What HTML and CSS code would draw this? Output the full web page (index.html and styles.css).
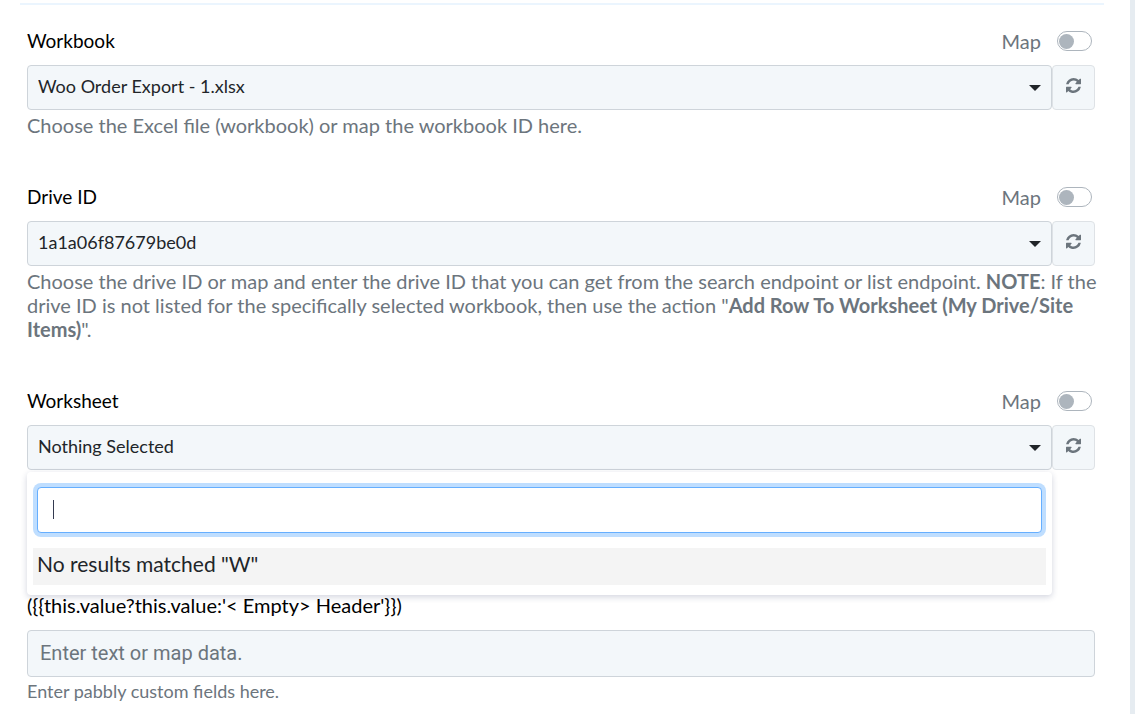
FILE: index.html
```html
<!DOCTYPE html>
<html lang="en">
<head>
  <meta charset="UTF-8" />
  <meta name="viewport" content="width=device-width, initial-scale=1" />
  <title>Action setup</title>
  <link rel="stylesheet" href="styles.css">
</head>
<body>
  <svg class="sprite" aria-hidden="true">
    <symbol id="icon-refresh" viewBox="0 0 1536 1536">
      <path d="M1511 928q0 5-1 7-64 268-268 434.500T764 1536q-146 0-282.500-55T238 1324l-129 129q-19 19-45 19t-45-19-19-45V960q0-26 19-45t45-19h448q26 0 45 19t19 45-19 45l-137 137q71 66 161 102t187 36q134 0 250-65t186-179q11-17 53-117 8-23 30-23h192q13 0 22.500 9.500t9.500 22.500zm25-800v448q0 26-19 45t-45 19h-448q-26 0-45-19t-19-45 19-45l138-138Q969 256 768 256q-134 0-250 65T332 500q-11 17-53 117-8 23-30 23H50q-13 0-22.500-9.500T18 608v-7q65-268 270-434.500T768 0q146 0 284 55.500T1297 212l130-129q19-19 45-19t45 19 19 45z" />
    </symbol>
  </svg>

  <form class="card">
    <div class="field">
      <div class="field-head">
        <label for="workbook">Workbook</label>
        <label class="map">Map <input type="checkbox" class="switch"></label>
      </div>
      <div class="control">
        <div class="select-wrap">
          <select id="workbook">
            <option>Woo Order Export - 1.xlsx</option>
          </select>
        </div>
        <button type="button" class="refresh" aria-label="Refresh workbooks">
          <svg><use href="#icon-refresh" /></svg>
        </button>
      </div>
      <p class="help">Choose the Excel file (workbook) or map the workbook ID here.</p>
    </div>

    <div class="field">
      <div class="field-head">
        <label for="drive">Drive ID</label>
        <label class="map">Map <input type="checkbox" class="switch"></label>
      </div>
      <div class="control">
        <div class="select-wrap">
          <select id="drive">
            <option>1a1a06f87679be0d</option>
          </select>
        </div>
        <button type="button" class="refresh" aria-label="Refresh drives">
          <svg><use href="#icon-refresh" /></svg>
        </button>
      </div>
      <p class="help">Choose the drive ID or map and enter the drive ID that you can get from the search endpoint or list endpoint. <b>NOTE</b>: If the drive ID is not listed for the specifically selected workbook, then use the action "<b>Add Row To Worksheet (My Drive/Site Items)</b>".</p>
    </div>

    <div class="field field-open">
      <div class="field-head">
        <label for="worksheet">Worksheet</label>
        <label class="map">Map <input type="checkbox" class="switch"></label>
      </div>
      <div class="control">
        <div class="select-wrap">
          <select id="worksheet">
            <option>Nothing Selected</option>
          </select>
          <div class="menu">
            <div class="search-wrap">
              <input type="text" class="menu-search" aria-label="Search worksheets" autofocus>
            </div>
            <div class="no-results">No results matched "W"</div>
          </div>
        </div>
        <button type="button" class="refresh" aria-label="Refresh worksheets">
          <svg><use href="#icon-refresh" /></svg>
        </button>
      </div>
    </div>

    <div class="field">
      <label class="header-label" for="header">({{this.value?this.value:'&lt; Empty&gt; Header'}})</label>
      <input type="text" class="text-input" id="header" placeholder="Enter text or map data.">
      <p class="help help-small">Enter pabbly custom fields here.</p>
    </div>
  </form>
</body>
</html>
```

FILE: styles.css
```css
* {
  box-sizing: border-box;
}
body {
  margin: 0;
  padding-right: 5px;
  background: #e6ecf1;
  font-family: Lato, "Liberation Sans", sans-serif;
  font-size: 19px;
  line-height: 24px;
  color: #000;
  overflow: hidden;
}
.sprite {
  display: none;
}
.card {
  min-height: 100vh;
  padding: 3px 26px 0 20px;
  background: #fff;
}
.card::before {
  content: "";
  display: block;
  height: 2px;
  margin-bottom: 22px;
  background: #ebf5fe;
}
.field {
  margin: 0 9px 46px 7px;
}
.field-open {
  margin-bottom: 123px;
}
.field-head {
  display: flex;
  justify-content: space-between;
  align-items: center;
  height: 28px;
  margin-bottom: 10px;
}
.map {
  display: flex;
  align-items: center;
  gap: 16px;
  margin-right: 3px;
  color: #6c757d;
  font-size: 20px;
}

/* toggle */
.switch {
  appearance: none;
  display: flex;
  align-items: center;
  width: 35px;
  height: 20px;
  margin: 0;
  padding: 1px;
  border: 1px solid #adb5bd;
  border-radius: 10px;
  background: #fff;
}
.switch::before {
  content: "";
  width: 15px;
  height: 15px;
  border-radius: 50%;
  background: #adb5bd;
}
.switch:checked {
  justify-content: flex-end;
}

.control {
  display: flex;
}
.select-wrap {
  position: relative;
  flex: 1;
}
.select-wrap::after {
  content: "";
  position: absolute;
  top: 20px;
  right: 11px;
  border: 6px solid transparent;
  border-top-color: #212529;
  border-bottom: 0;
  pointer-events: none;
}
select {
  appearance: none;
  display: block;
  width: 100%;
  height: 45px;
  padding: 0 30px 4px 10px;
  border: 1px solid #ced4da;
  border-radius: 4px;
  background: #f3f7fa;
  color: #212529;
  font: inherit;
  font-size: 18px;
}
.refresh {
  display: flex;
  justify-content: center;
  align-items: center;
  width: 43px;
  padding: 0 0 4px;
  border: 1px solid #dee2e6;
  border-radius: 4px;
  background: #f3f7fa;
  color: #6c757d;
}
.refresh svg {
  width: 15px;
  height: 15px;
  fill: currentColor;
}
.help {
  margin: 3px -9px 0 0;
  color: #6c757d;
  font-size: 20px;
}
.help-small {
  margin-top: 2px;
  font-size: 18px;
}

/* open dropdown */
.menu {
  position: absolute;
  top: 47px;
  left: 0;
  right: 0;
  z-index: 1;
  padding: 15px 6px 10px;
  border-radius: 4px;
  background: #fff;
  box-shadow: 0 2px 6px rgba(30, 40, 90, 0.2);
}
.search-wrap {
  position: relative;
  margin: 0 4px 15px;
}
.search-wrap:focus-within::after {
  content: "";
  position: absolute;
  top: 13px;
  left: 16px;
  width: 1px;
  height: 19px;
  background: #343a50;
}
.menu-search {
  display: block;
  width: 100%;
  height: 46px;
  padding: 0 15px;
  border: 1px solid #66afff;
  border-radius: 4px;
  outline: none;
  box-shadow: 0 0 0 4px #bfdeff;
  color: #495057;
  caret-color: transparent;
  font: inherit;
}
.no-results {
  height: 37px;
  padding: 4px;
  background: #f4f4f4;
  color: #212529;
  font-size: 21px;
}

.header-label {
  display: block;
  margin-bottom: 13px;
  font-size: 20px;
}
.text-input {
  display: block;
  width: 100%;
  height: 47px;
  padding: 0 12px 2px;
  border: 1px solid #ced4da;
  border-radius: 4px;
  background: #f3f7fa;
  font-family: Roboto, sans-serif;
  font-size: 20px;
}
.text-input::placeholder {
  color: #6c757d;
}
```
